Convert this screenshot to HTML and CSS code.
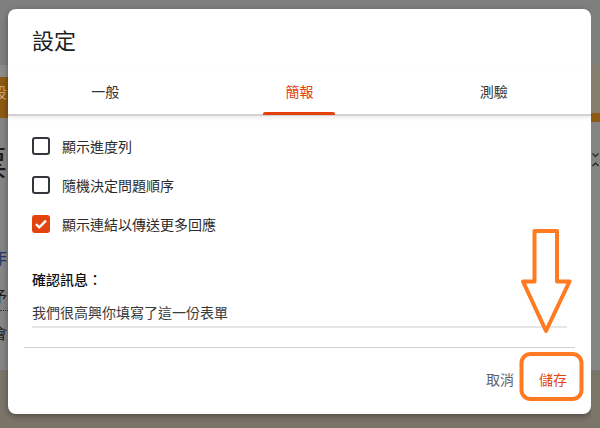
FILE: index.html
```html
<!DOCTYPE html>
<html lang="zh-Hant">
<head>
  <meta charset="UTF-8" />
  <meta name="viewport" content="width=device-width, initial-scale=1.0" />
  <title>設定</title>
  <link rel="stylesheet" href="styles.css">
</head>
<body>
  <div class="page">
    <div class="side side-left">
      <div class="frag frag-head"><span>設</span></div>
      <div class="frag frag-title"><span>票</span></div>
      <div class="frag frag-link"><span>作</span></div>
      <div class="frag frag-small"><span>予</span></div>
      <div class="frag-dots"></div>
      <div class="frag frag-small frag-last"><span>會</span></div>
    </div>

    <div class="dialog">
      <h1 class="dialog-title">設定</h1>

      <div class="tabs">
        <div class="tab">一般</div>
        <div class="tab tab-active">簡報<span class="tab-bar"></span></div>
        <div class="tab">測驗</div>
      </div>

      <div class="dialog-body">
        <label class="check-row">
          <span class="check-box"></span>
          <span class="check-label">顯示進度列</span>
        </label>
        <label class="check-row">
          <span class="check-box"></span>
          <span class="check-label">隨機決定問題順序</span>
        </label>
        <label class="check-row">
          <span class="check-box checked">
            <svg viewBox="0 0 18 18" width="18" height="18"><path d="M4 9.2l3.3 3.2L14 5.6" fill="none" stroke="#fff" stroke-width="2.4"/></svg>
          </span>
          <span class="check-label">顯示連結以傳送更多回應</span>
        </label>

        <div class="field-label">確認訊息：</div>
        <div class="field-input">我們很高興你填寫了這一份表單</div>
      </div>

      <div class="dialog-footer">
        <button class="btn btn-cancel">取消</button>
        <button class="btn btn-save">儲存</button>
      </div>
    </div>

    <div class="side side-right">
      <svg class="chevrons" viewBox="0 0 9 16" width="9" height="16">
        <path d="M1.5 1.5l3 3 3-3M1.5 14l3-3 3 3" fill="none" stroke="#222" stroke-width="1.2"/>
      </svg>
    </div>

    <svg class="marks" viewBox="0 0 600 428" width="600" height="428">
      <polygon points="534.5,231 557,231 557,281.5 569.5,281.5 546,331 523,281.5 534.5,281.5"
        fill="none" stroke="#ff7a21" stroke-width="4" stroke-linejoin="round"/>
      <rect x="521.5" y="354" width="60" height="45" rx="9"
        fill="none" stroke="#ff7a21" stroke-width="4"/>
    </svg>
  </div>
</body>
</html>
```

FILE: styles.css
```css
body {
  margin: 0;
  font-family: "Noto Sans CJK TC", "Noto Sans", sans-serif;
  background: #fff;
}
.page {
  position: relative;
  width: 600px;
  height: 428px;
  display: flex;
  overflow: hidden;
  background: linear-gradient(#7f7f7f 0, #7f7f7f 370px, #7a7469 370px);
}
.side {
  flex: none;
  height: 428px;
  overflow: hidden;
}
.side-left {
  width: 8px;
  background: linear-gradient(#7f7f7f 0, #7f7f7f 65px, #8b8b8b 65px, #8b8b8b 77px,
    #8d5a12 77px, #8d5a12 118px, #858585 118px, #858585 370px, #7a7469 370px);
}
.side-right {
  width: 9px;
  background: linear-gradient(#7f7f7f 0, #7f7f7f 65px, #857d6e 65px, #857d6e 113px,
    #8d5a12 113px, #8d5a12 122px, #858585 122px, #858585 370px, #7a7469 370px);
}
.frag {
  display: flex;
  justify-content: flex-end;
  white-space: nowrap;
  padding-right: 1px;
  color: #1a1a1a;
}
.frag-head {
  margin-top: 82px;
  font-size: 15px;
  line-height: 20px;
  color: #cfa66a;
}
.frag-title {
  margin-top: 40px;
  font-size: 34px;
  line-height: 40px;
}
.frag-link {
  margin-top: 64px;
  font-size: 17px;
  line-height: 22px;
  color: #22386a;
}
.frag-small {
  margin-top: 18px;
  font-size: 15px;
  line-height: 20px;
}
.frag-dots {
  margin-top: 4px;
  height: 0;
  border-top: 1px dotted #3a3a3a;
}
.frag-last {
  margin-top: 12px;
}

.dialog {
  flex: none;
  width: 583px;
  height: 405px;
  margin-top: 9px;
  background: #fff;
  border-radius: 8px;
  box-shadow: 0 2px 6px rgba(0, 0, 0, 0.35);
  display: flex;
  flex-direction: column;
}
.dialog-title {
  margin: 15px 0 0;
  padding: 0 24px;
  font-size: 22px;
  font-weight: 400;
  line-height: 30px;
  color: #202124;
}
.tabs {
  display: flex;
  margin-top: 14px;
  border-bottom: 2px solid #d2d2d2;
  box-shadow: 0 2px 4px rgba(0, 0, 0, 0.08);
}
.tab {
  flex: 1;
  height: 46px;
  display: flex;
  flex-direction: column;
  align-items: center;
  justify-content: center;
  position: relative;
  font-size: 14px;
  color: #333;
}
.tab-active {
  color: #e5410f;
}
.tab-bar {
  position: absolute;
  bottom: -1px;
  width: 72px;
  height: 3px;
  border-radius: 2px 2px 0 0;
  background: #e5410f;
}
.dialog-body {
  padding: 10px 24px 0;
}
.check-row {
  display: flex;
  align-items: center;
  height: 39px;
}
.check-box {
  width: 14px;
  height: 14px;
  border: 2px solid #33373b;
  border-radius: 3px;
  display: flex;
  align-items: center;
  justify-content: center;
}
.check-box.checked {
  border-color: #e2440f;
  background: #e2440f;
}
.check-box svg {
  flex: none;
}
.check-label {
  margin-left: 12px;
  font-size: 14px;
  color: #2b2b2b;
}
.field-label {
  margin-top: 26px;
  font-size: 14px;
  line-height: 20px;
  font-weight: 500;
  color: #111;
}
.field-input {
  margin-top: 13px;
  width: 535px;
  padding-bottom: 4px;
  border-bottom: 2px solid #e6e6e6;
  font-size: 14px;
  line-height: 20px;
  color: #3a3a3a;
}
.dialog-footer {
  display: flex;
  justify-content: flex-end;
  gap: 9px;
  margin: 19px 16px 0;
  padding-top: 13px;
  border-top: 1px solid #cdced6;
}
.btn {
  height: 36px;
  padding: 0 8px;
  border: none;
  background: none;
  font-family: inherit;
  font-size: 14px;
  cursor: pointer;
}
.btn-cancel {
  color: #5f6368;
}
.btn-save {
  color: #e2440f;
}
.chevrons {
  display: block;
  margin-top: 152px;
}
.marks {
  position: absolute;
  left: 0;
  top: 0;
  pointer-events: none;
}
```
